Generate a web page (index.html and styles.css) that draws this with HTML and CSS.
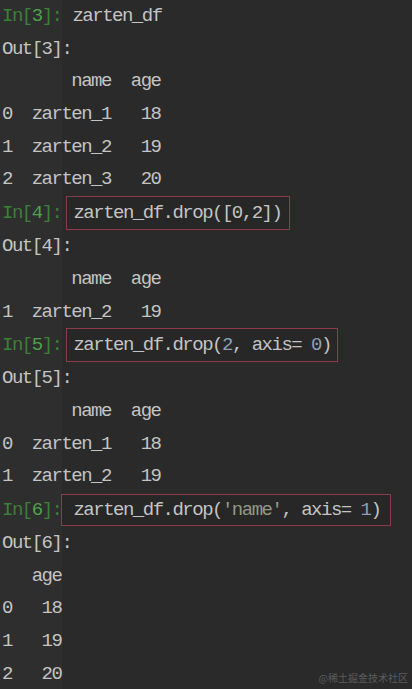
FILE: index.html
```html
<!DOCTYPE html>
<html lang="zh">
<head>
<meta charset="utf-8">
<link rel="stylesheet" href="styles.css">
</head>
<body>
<div class="console">
  <div class="line"><span class="prompt">In[<b>3</b>]:</span> <span class="code-plain">zarten_df</span></div>
  <div class="line">Out[3]:</div>
  <div class="line">       name  age</div>
  <div class="line">0  zarten_1   18</div>
  <div class="line">1  zarten_2   19</div>
  <div class="line">2  zarten_3   20</div>
  <div class="line boxed-line"><span class="prompt">In[<b>4</b>]:</span><span class="box box-a">zarten_df.drop([0,2])</span></div>
  <div class="line">Out[4]:</div>
  <div class="line">       name  age</div>
  <div class="line">1  zarten_2   19</div>
  <div class="line boxed-line"><span class="prompt">In[<b>5</b>]:</span><span class="box box-a box-c">zarten_df.drop(<span class="num">2</span>, axis= <span class="num">0</span>)</span></div>
  <div class="line">Out[5]:</div>
  <div class="line">       name  age</div>
  <div class="line">0  zarten_1   18</div>
  <div class="line">1  zarten_2   19</div>
  <div class="line boxed-line"><span class="prompt">In[<b>6</b>]:</span><span class="box box-b">zarten_df.drop(<span class="str">'name'</span>, axis= <span class="num">1</span>)</span></div>
  <div class="line">Out[6]:</div>
  <div class="line">   age</div>
  <div class="line">0   18</div>
  <div class="line">1   19</div>
  <div class="line">2   20</div>
</div>
<div class="watermark">@稀土掘金技术社区</div>
</body>
</html>
```

FILE: styles.css
```css
html, body {
  margin: 0;
  padding: 0;
}
body {
  width: 412px;
  height: 689px;
  overflow: hidden;
  position: relative;
  background: linear-gradient(to right, #2e2e2e 0, #2e2e2e 62px, #2a2a2a 62px, #2a2a2a 100%);
}
.console {
  margin-top: 0;
  padding-left: 2px;
  font-family: "Liberation Mono", monospace;
  font-size: 19px;
  letter-spacing: -1.5px;
  color: #c4c4c4;
}
.line {
  height: 32.7px;
  line-height: 32.7px;
  white-space: pre;
  display: flex;
  align-items: center;
}
.boxed-line {
  height: 34px;
}
.prompt {
  color: #3d7f3a;
}
.prompt b {
  font-weight: normal;
  color: #4fa24a;
}
.code-plain {
  margin-left: 11px;
}
.box {
  box-sizing: border-box;
  height: 34px;
  line-height: 32px;
  border: 1px solid #8c3b4a;
  background: #272727;
  padding-left: 6px;
  padding-right: 8px;
}
.box-a {
  margin-left: 5px;
}
.box-c {
  padding-right: 6px;
}
.box-b {
  margin-left: 0px;
  padding-left: 11px;
  padding-right: 10px;
  height: 32px;
  line-height: 30px;
}
.num {
  color: #8aa0b8;
}
.str {
  color: #8f9a86;
}
.watermark {
  position: absolute;
  right: 4px;
  bottom: 4px;
  font-family: "Noto Sans CJK SC", sans-serif;
  font-size: 10px;
  color: #5c5c5c;
  letter-spacing: 0;
}
```
